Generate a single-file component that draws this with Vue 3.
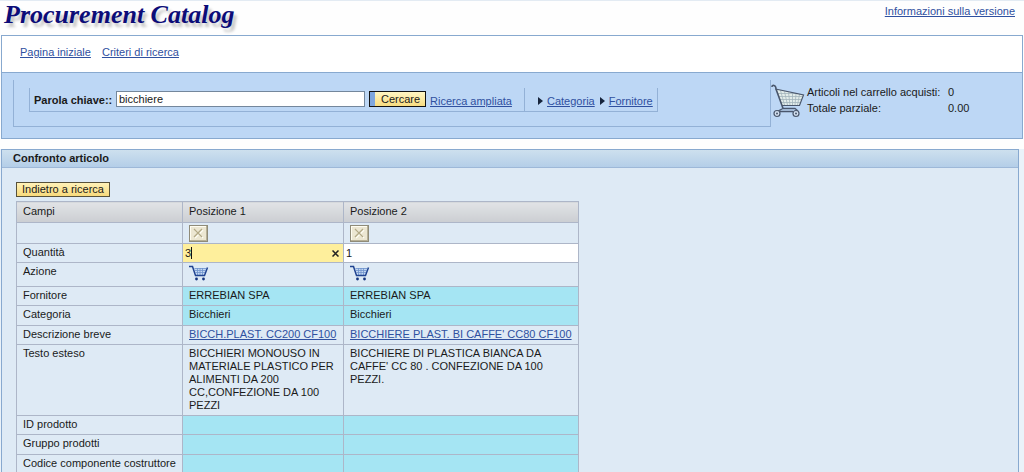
<script setup>
import { ref } from 'vue'

const keyword = ref('bicchiere')
const quantities = ref(['3', '1'])
const columns = ['Posizione 1', 'Posizione 2']

const rows = [
  { label: 'Fornitore', size: 'h19', kind: 'diff', values: ['ERREBIAN SPA', 'ERREBIAN SPA'] },
  { label: 'Categoria', size: 'h20', kind: 'diff', values: ['Bicchieri', 'Bicchieri'] },
  {
    label: 'Descrizione breve',
    size: 'h19',
    kind: 'link',
    values: ['BICCH.PLAST. CC200 CF100', "BICCHIERE PLAST. BI CAFFE' CC80 CF100"],
  },
  {
    label: 'Testo esteso',
    size: 'tall',
    kind: 'text',
    values: [
      'BICCHIERI MONOUSO IN MATERIALE PLASTICO PER ALIMENTI DA 200 CC,CONFEZIONE DA 100 PEZZI',
      "BICCHIERE DI PLASTICA BIANCA DA CAFFE' CC 80 . CONFEZIONE DA 100 PEZZI.",
    ],
  },
  { label: 'ID prodotto', size: 'h19', kind: 'diff', values: ['', ''] },
  { label: 'Gruppo prodotti', size: 'h20', kind: 'diff', values: ['', ''] },
  { label: 'Codice componente costruttore', size: 'h20', kind: 'diff', values: ['', ''] },
]
</script>

<template>
  <div class="page">
    <header class="masthead">
      <h1>Procurement Catalog</h1>
      <a href="#">Informazioni sulla versione</a>
    </header>

    <nav class="nav">
      <a href="#">Pagina iniziale</a>
      <a href="#">Criteri di ricerca</a>
    </nav>

    <section class="search">
      <div class="frame">
        <form class="bar" @submit.prevent>
          <div class="query">
            <label for="keyword">Parola chiave::</label>
            <input id="keyword" v-model="keyword" type="text" />
            <button type="submit" class="go">Cercare</button>
            <a href="#">Ricerca ampliata</a>
          </div>
          <div class="browse">
            <i class="arrow"></i><a href="#">Categoria</a>
            <i class="arrow"></i><a href="#">Fornitore</a>
          </div>
        </form>
      </div>
      <svg class="trolley" width="34" height="35" viewBox="0 0 34 35" fill="none">
        <path d="M4.500 6 L32.500 12 L28.500 22.500 H11 Z" fill="#e2ecea" />
        <path d="M7 10.500 H27 M8 13.500 H31 M9 16.500 H30 M10 19.500 H29 M9.500 7.500 L13.500 22 M13.500 8.500 L16.500 22 M17.500 9.500 L19 22 M21.500 10 V22 M25 11 L24 22 M28.500 11.500 L26.500 22" stroke="#a3b5bd" stroke-width=".8" />
        <path d="M4.500 6 L32.500 12 L28.500 22.500 H11" stroke="#49566c" stroke-width="1.200" />
        <path d="M1 4 Q1 2 3 2.500 Q5 3 5 6 L11 22.500 L12 25.500" stroke="#49566c" stroke-width="1.600" />
        <path d="M12 25.500 H24 L27 28 M12 25.500 L7 28 M9 28.500 H22" stroke="#49566c" stroke-width="1.300" />
        <circle cx="6" cy="30.500" r="3" fill="#d3e0f0" stroke="#49566c" stroke-width="1.200" />
        <circle cx="25" cy="30.500" r="3" fill="#d3e0f0" stroke="#49566c" stroke-width="1.200" />
        <circle cx="6" cy="30.500" r="1" fill="#49566c" />
        <circle cx="25" cy="30.500" r="1" fill="#49566c" />
      </svg>
      <dl class="totals">
        <dt>Articoli nel carrello acquisti:</dt>
        <dd>0</dd>
        <dt>Totale parziale:</dt>
        <dd>0.00</dd>
      </dl>
    </section>

    <main class="below">
      <section class="panel">
        <h2>Confronto articolo</h2>
        <div class="body">
          <button type="button" class="back">Indietro a ricerca</button>
          <table>
            <colgroup>
              <col class="c-label" />
              <col class="c-one" />
              <col class="c-two" />
            </colgroup>
            <thead>
              <tr>
                <th scope="col">Campi</th>
                <th v-for="c in columns" :key="c" scope="col">{{ c }}</th>
              </tr>
            </thead>
            <tbody>
              <tr class="h21">
                <td></td>
                <td v-for="c in columns" :key="c">
                  <button type="button" class="remove" :aria-label="'Rimuovi ' + c">
                    <svg width="11" height="11" viewBox="0 0 11 11">
                      <path d="M2 2 L10 10 M10 2 L2 10" stroke="#fffef4" stroke-width="1.500" />
                      <path d="M1 1 L9 9 M9 1 L1 9" stroke="#b3aa86" stroke-width="1.300" />
                    </svg>
                  </button>
                </td>
              </tr>
              <tr class="h19">
                <th scope="row">Quantità</th>
                <td v-for="(c, i) in columns" :key="c" class="entry" :class="{ active: i === 0 }">
                  <div class="field">
                    <input v-model="quantities[i]" type="text" :aria-label="'Quantità ' + c" />
                    <i v-if="i === 0" class="caret"></i>
                    <button v-if="i === 0" type="button" class="clear" aria-label="Cancella">
                      <svg width="7" height="7" viewBox="0 0 7 7">
                        <path d="M.5 .5 L6.500 6.500 M6.500 .5 L.5 6.500" stroke="#222" stroke-width="1.500" />
                      </svg>
                    </button>
                  </div>
                </td>
              </tr>
              <tr class="h24">
                <th scope="row">Azione</th>
                <td v-for="c in columns" :key="c">
                  <button type="button" class="add" :aria-label="'Aggiungi ' + c">
                    <svg width="20" height="16" viewBox="0 0 20 16" fill="none">
                      <path d="M5 3 H17.500 L15 10 H7.500 Z" fill="#c3d8f2" />
                      <path d="M5.500 3.500 H17 M6 5.500 H16.500 M6.500 7.500 H16 M8.500 3 V10 M11 3 V10 M13.500 3 V10" stroke="#6f93cb" stroke-width=".8" />
                      <path d="M0 1.500 H3.500 L6.500 10.500 H15.500 L18.500 2.500" stroke="#1f4391" stroke-width="1.500" />
                      <circle cx="7.500" cy="14" r="1.400" fill="#14357f" />
                      <circle cx="14.500" cy="14" r="1.400" fill="#14357f" />
                    </svg>
                  </button>
                </td>
              </tr>
              <tr v-for="r in rows" :key="r.label" :class="r.size">
                <th scope="row">{{ r.label }}</th>
                <td v-for="(v, i) in r.values" :key="i" :class="r.kind">
                  <a v-if="r.kind === 'link'" href="#">{{ v }}</a>
                  <template v-else>{{ v }}</template>
                </td>
              </tr>
            </tbody>
          </table>
        </div>
      </section>
    </main>
  </div>
</template>

<style>
html,
body {
  margin: 0;
  height: 100%;
  overflow: hidden;
}
#app {
  height: 100%;
}
</style>

<style scoped>
.page {
  box-sizing: border-box;
  min-height: 100%;
  display: flex;
  flex-direction: column;
  border-top: 1px solid #e3ebf3;
  background: #fefefe;
  color: #1a1a1a;
  font: 11px/13px "Liberation Sans", Arial, sans-serif;
}
a {
  color: #2f50a0;
  text-decoration: underline;
}
button,
input {
  font: inherit;
  color: inherit;
  margin: 0;
  box-sizing: border-box;
}
.masthead {
  display: flex;
  justify-content: space-between;
  align-items: flex-start;
  height: 34px;
  padding: 0 9px 0 4px;
}
.masthead h1 {
  margin: 0;
  font: italic bold 26px/28px "Liberation Serif", serif;
  color: #0c0c78;
  text-shadow: 3px 4px 3px #c4c4c4;
}
.masthead a {
  margin-top: 4px;
}
.nav {
  display: flex;
  align-items: center;
  gap: 11px;
  height: 33px;
  margin: 0 1px;
  padding: 0 18px 3px;
  border: 1px solid #88a9cf;
  border-bottom: 0;
  background: #fff;
}
.search {
  display: flex;
  align-items: flex-start;
  height: 65px;
  margin: 0 1px;
  border: 1px solid #88a9cf;
  background: #bdd7f5;
}
.frame {
  flex: 0 1 758px;
  box-sizing: border-box;
  height: 47px;
  margin: 7px 0 0 11px;
  padding: 8px 15px 0;
  border: 1px solid #93b1d6;
  border-top: 0;
}
.bar {
  display: flex;
  width: 629px;
  height: 24px;
  box-sizing: border-box;
  border: 1px solid #93b1d6;
  border-top: 0;
}
.query {
  display: flex;
  flex: 0 0 495px;
  box-sizing: border-box;
  padding: 3px 0 0 4px;
  border-right: 1px solid #93b1d6;
}
.query label {
  width: 82px;
  margin-top: 3px;
  font-weight: bold;
}
.query input {
  width: 249px;
  height: 16px;
  padding: 0 2px;
  border: 1px solid #74879c;
  background: #fff;
}
.go {
  width: 57px;
  height: 16px;
  margin: 0 4px;
  padding: 0 0 0 6px;
  border: 1px solid #111;
  line-height: 13px;
  background: linear-gradient(90deg, #7ea6de 5px, transparent 5px),
    linear-gradient(#fff6c4, #f8dc80);
}
.query a {
  margin-top: 4px;
}
.browse {
  display: flex;
  align-items: center;
  padding: 3px 0 0 13px;
}
.arrow {
  border: 4px solid transparent;
  border-right: 0;
  border-left: 5px solid #16243c;
  margin-right: 4px;
}
.browse a {
  margin-right: 5px;
}
.trolley {
  margin: 10px 2px 0 0;
}
.totals {
  display: grid;
  grid-template-columns: 141px auto;
  row-gap: 3px;
  margin: 13px 0 0;
}
.totals dd {
  margin: 0;
}
.below {
  flex: 1;
  display: flex;
  margin-top: 10px;
  padding: 0 5px 0 1px;
  background: #eaf2f9;
}
.panel {
  flex: 1;
  border: 1px solid #88a9cf;
  border-bottom: 0;
  background: #deeaf5;
}
.panel h2 {
  margin: 0;
  padding: 2px 11px;
  font: bold 11px/13px "Liberation Sans", Arial, sans-serif;
  border-bottom: 1px solid #9db8d8;
  background: linear-gradient(#cde0ee, #b4cee8);
}
.body {
  padding: 14px 14px 0;
}
.back {
  display: block;
  height: 15px;
  padding: 0 5px;
  border: 1px solid #57513a;
  line-height: 13px;
  background: linear-gradient(#fff2b8, #f8da7c);
}
table {
  margin-top: 4px;
  width: 563px;
  table-layout: fixed;
  border-collapse: collapse;
}
.c-label {
  width: 166px;
}
.c-one {
  width: 161px;
}
.c-two {
  width: 235px;
}
th,
td {
  box-sizing: border-box;
  padding: 2px 6px 0;
  border: 1px solid #adb6c8;
  text-align: left;
  vertical-align: top;
  font-weight: normal;
}
thead th {
  height: 21px;
  padding-top: 3px;
  background: linear-gradient(#e1e3e6, #cbced2);
}
thead th,
tbody th {
  white-space: nowrap;
}
.h19 > * {
  height: 19px;
}
.h20 > * {
  height: 20px;
}
.h21 > * {
  height: 21px;
}
.h24 > * {
  height: 24px;
}
.tall > * {
  height: 71px;
}
.diff {
  background: #a5e5f3;
}
.link {
  white-space: nowrap;
}
.remove {
  display: flex;
  align-items: center;
  justify-content: center;
  width: 19px;
  height: 17px;
  padding: 0;
  border: 1px solid #8f8b78;
  background: #ece7d2;
  box-shadow: inset -1px -1px #b8b196, inset 1px 1px #fffdf0;
}
.add {
  display: block;
  padding: 0;
  border: 0;
  background: none;
}
.add svg {
  display: block;
}
.entry {
  padding: 0;
  background: #fff;
}
.active {
  background: #feef9c;
}
.field {
  position: relative;
}
.field input {
  display: block;
  width: 100%;
  height: 18px;
  padding: 0 2px;
  border: 0;
  background: transparent;
}
.caret {
  position: absolute;
  left: 8px;
  top: 3px;
  width: 1px;
  height: 12px;
  background: #111;
}
.clear {
  position: absolute;
  right: 4px;
  top: 6px;
  padding: 0;
  border: 0;
  background: none;
}
.clear svg {
  display: block;
}
</style>
